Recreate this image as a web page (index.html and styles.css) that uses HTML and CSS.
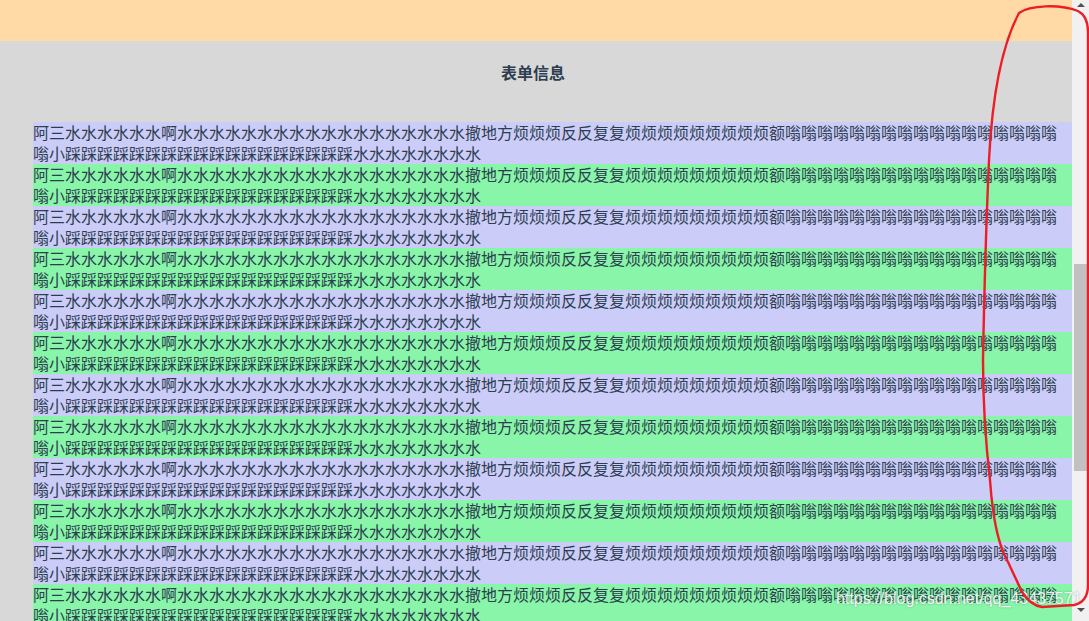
FILE: index.html
```html
<!DOCTYPE html>
<html lang="zh-CN">
<head>
<meta charset="utf-8">
<title>表单信息</title>
<link rel="stylesheet" href="styles.css">
</head>
<body>
<div class="page">
  <div class="main">
    <header class="topbar"></header>
    <section class="content">
      <h3 class="title">表单信息</h3>
      <ul class="list">
        <li class="row odd">阿三水水水水水水啊水水水水水水水水水水水水水水水水水水撤地方烦烦烦反反复复烦烦烦烦烦烦烦烦烦额嗡嗡嗡嗡嗡嗡嗡嗡嗡嗡嗡嗡嗡嗡嗡嗡嗡嗡小踩踩踩踩踩踩踩踩踩踩踩踩踩踩踩踩踩踩水水水水水水水水</li>
        <li class="row even">阿三水水水水水水啊水水水水水水水水水水水水水水水水水水撤地方烦烦烦反反复复烦烦烦烦烦烦烦烦烦额嗡嗡嗡嗡嗡嗡嗡嗡嗡嗡嗡嗡嗡嗡嗡嗡嗡嗡小踩踩踩踩踩踩踩踩踩踩踩踩踩踩踩踩踩踩水水水水水水水水</li>
        <li class="row odd">阿三水水水水水水啊水水水水水水水水水水水水水水水水水水撤地方烦烦烦反反复复烦烦烦烦烦烦烦烦烦额嗡嗡嗡嗡嗡嗡嗡嗡嗡嗡嗡嗡嗡嗡嗡嗡嗡嗡小踩踩踩踩踩踩踩踩踩踩踩踩踩踩踩踩踩踩水水水水水水水水</li>
        <li class="row even">阿三水水水水水水啊水水水水水水水水水水水水水水水水水水撤地方烦烦烦反反复复烦烦烦烦烦烦烦烦烦额嗡嗡嗡嗡嗡嗡嗡嗡嗡嗡嗡嗡嗡嗡嗡嗡嗡嗡小踩踩踩踩踩踩踩踩踩踩踩踩踩踩踩踩踩踩水水水水水水水水</li>
        <li class="row odd">阿三水水水水水水啊水水水水水水水水水水水水水水水水水水撤地方烦烦烦反反复复烦烦烦烦烦烦烦烦烦额嗡嗡嗡嗡嗡嗡嗡嗡嗡嗡嗡嗡嗡嗡嗡嗡嗡嗡小踩踩踩踩踩踩踩踩踩踩踩踩踩踩踩踩踩踩水水水水水水水水</li>
        <li class="row even">阿三水水水水水水啊水水水水水水水水水水水水水水水水水水撤地方烦烦烦反反复复烦烦烦烦烦烦烦烦烦额嗡嗡嗡嗡嗡嗡嗡嗡嗡嗡嗡嗡嗡嗡嗡嗡嗡嗡小踩踩踩踩踩踩踩踩踩踩踩踩踩踩踩踩踩踩水水水水水水水水</li>
        <li class="row odd">阿三水水水水水水啊水水水水水水水水水水水水水水水水水水撤地方烦烦烦反反复复烦烦烦烦烦烦烦烦烦额嗡嗡嗡嗡嗡嗡嗡嗡嗡嗡嗡嗡嗡嗡嗡嗡嗡嗡小踩踩踩踩踩踩踩踩踩踩踩踩踩踩踩踩踩踩水水水水水水水水</li>
        <li class="row even">阿三水水水水水水啊水水水水水水水水水水水水水水水水水水撤地方烦烦烦反反复复烦烦烦烦烦烦烦烦烦额嗡嗡嗡嗡嗡嗡嗡嗡嗡嗡嗡嗡嗡嗡嗡嗡嗡嗡小踩踩踩踩踩踩踩踩踩踩踩踩踩踩踩踩踩踩水水水水水水水水</li>
        <li class="row odd">阿三水水水水水水啊水水水水水水水水水水水水水水水水水水撤地方烦烦烦反反复复烦烦烦烦烦烦烦烦烦额嗡嗡嗡嗡嗡嗡嗡嗡嗡嗡嗡嗡嗡嗡嗡嗡嗡嗡小踩踩踩踩踩踩踩踩踩踩踩踩踩踩踩踩踩踩水水水水水水水水</li>
        <li class="row even">阿三水水水水水水啊水水水水水水水水水水水水水水水水水水撤地方烦烦烦反反复复烦烦烦烦烦烦烦烦烦额嗡嗡嗡嗡嗡嗡嗡嗡嗡嗡嗡嗡嗡嗡嗡嗡嗡嗡小踩踩踩踩踩踩踩踩踩踩踩踩踩踩踩踩踩踩水水水水水水水水</li>
        <li class="row odd">阿三水水水水水水啊水水水水水水水水水水水水水水水水水水撤地方烦烦烦反反复复烦烦烦烦烦烦烦烦烦额嗡嗡嗡嗡嗡嗡嗡嗡嗡嗡嗡嗡嗡嗡嗡嗡嗡嗡小踩踩踩踩踩踩踩踩踩踩踩踩踩踩踩踩踩踩水水水水水水水水</li>
        <li class="row even">阿三水水水水水水啊水水水水水水水水水水水水水水水水水水撤地方烦烦烦反反复复烦烦烦烦烦烦烦烦烦额嗡嗡嗡嗡嗡嗡嗡嗡嗡嗡嗡嗡嗡嗡嗡嗡嗡嗡小踩踩踩踩踩踩踩踩踩踩踩踩踩踩踩踩踩踩水水水水水水水水</li>
        <li class="row odd">阿三水水水水水水啊水水水水水水水水水水水水水水水水水水撤地方烦烦烦反反复复烦烦烦烦烦烦烦烦烦额嗡嗡嗡嗡嗡嗡嗡嗡嗡嗡嗡嗡嗡嗡嗡嗡嗡嗡小踩踩踩踩踩踩踩踩踩踩踩踩踩踩踩踩踩踩水水水水水水水水</li>
      </ul>
    </section>
  </div>
  <div class="scrollbar">
    <div class="arrow up"></div>
    <div class="track"><div class="thumb"></div></div>
    <div class="arrow down"></div>
  </div>
  <div class="watermark">https://blog.csdn.net/qq_43437571</div>
  <svg class="annotation" width="1089" height="621" viewBox="0 0 1089 621">
    <path d="M1019 13 C1030 5 1060 4 1078 11 Q1088 16 1088 32 L1088 585 Q1088 602 1074 605 L1042 607 Q1030 605 1022 592 L1008 562 Q994 538 990 480 Q983 420 983 360 Q985 250 989 160 Q994 60 1019 13 Z" fill="none" stroke="#ee1c25" stroke-width="2.4" stroke-linejoin="round"/>
  </svg>
</div>
</body>
</html>
```
FILE: styles.css
```css
html, body {
  margin: 0;
  padding: 0;
  height: 621px;
  overflow: hidden;
}

body {
  font-family: "Noto Sans CJK SC", "Noto Sans", sans-serif;
  color: #2c3e50;
  background: #d8d8d8;
}

.page {
  position: relative;
  display: flex;
  width: 1089px;
  height: 621px;
  overflow: hidden;
}

.main {
  flex: 1;
  min-width: 0;
  display: flex;
  flex-direction: column;
  background: #d8d8d8;
}

.topbar {
  height: 41px;
  background: #ffdaa6;
  flex: none;
}

.content {
  padding-left: 33px;
}

.title {
  margin: 21px 0 0;
  padding-right: 39px;
  font-size: 16px;
  line-height: 21px;
  font-weight: bold;
  text-align: center;
}

.list {
  list-style: none;
  margin: 39px 0 0;
  padding: 0;
}

.row {
  font-size: 16px;
  line-height: 21px;
  word-break: break-all;
}

.row.odd {
  background: #ccccf8;
}

.row.even {
  background: #88f5a9;
}

.scrollbar {
  flex: none;
  width: 17px;
  height: 621px;
  background: #f1f1f1;
  display: flex;
  flex-direction: column;
}

.arrow {
  flex: none;
  display: flex;
  justify-content: center;
}

.arrow::before {
  content: "";
  width: 0;
  height: 0;
  border-left: 4px solid transparent;
  border-right: 4px solid transparent;
}

.arrow.up {
  height: 11px;
  align-items: flex-start;
  padding-top: 3px;
  box-sizing: border-box;
}

.arrow.up::before {
  border-bottom: 4px solid #505050;
}

.arrow.down {
  height: 16px;
  align-items: flex-start;
  padding-top: 3px;
  box-sizing: border-box;
}

.arrow.down::before {
  border-top: 4px solid #505050;
}

.track {
  flex: 1;
  min-height: 0;
  padding-top: 253px;
}

.thumb {
  margin: 0 2px;
  height: 207px;
  background: #c1c1c1;
}

.watermark {
  position: absolute;
  left: 836px;
  top: 590px;
  font-family: "Liberation Sans", Arial, sans-serif;
  font-size: 16px;
  line-height: 18px;
  color: rgba(255, 255, 255, 0.9);
  text-shadow: 0 0 2px rgba(90, 90, 90, 0.55);
  white-space: nowrap;
}

.annotation {
  position: absolute;
  left: 0;
  top: 0;
  pointer-events: none;
}
```
